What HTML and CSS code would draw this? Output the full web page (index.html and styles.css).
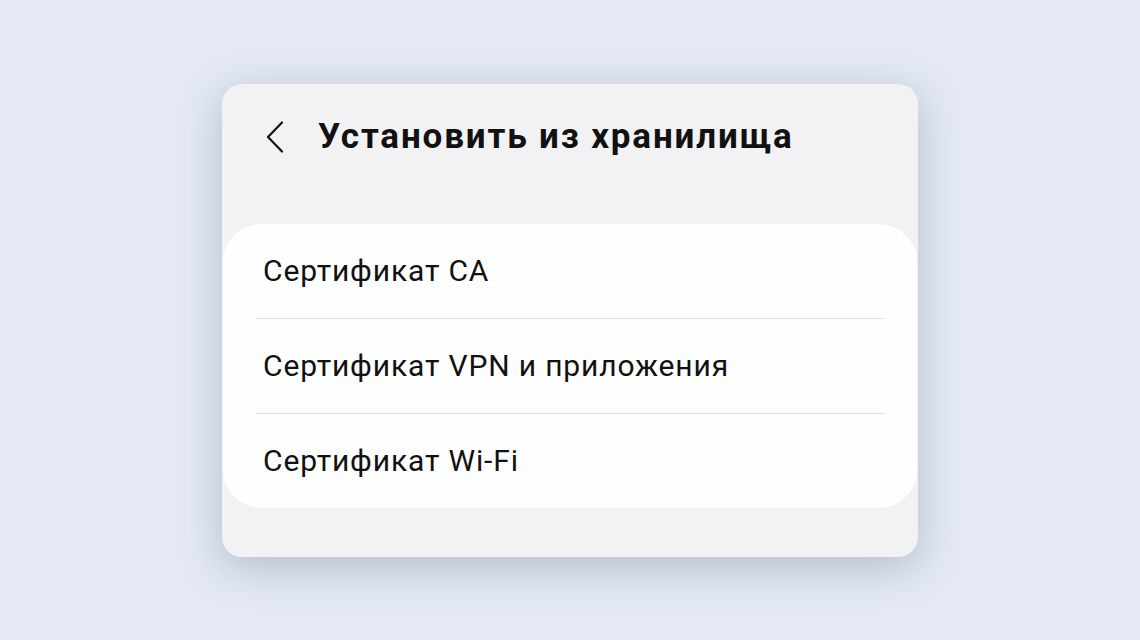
FILE: index.html
```html
<!DOCTYPE html>
<html lang="ru">
<head>
<meta charset="utf-8">
<title>Установить из хранилища</title>
<link rel="stylesheet" href="styles.css">
</head>
<body>
<div class="stage">
  <div class="card">
    <div class="header">
      <span class="back" aria-label="Назад">
        <svg width="20" height="32" viewBox="0 0 20 32"><path d="M17 1.5 L3 16 L17 30.5" fill="none" stroke="#111" stroke-width="2.2" stroke-linecap="round" stroke-linejoin="round"/></svg>
      </span>
      <h1 class="title">Установить из хранилища</h1>
    </div>
    <ul class="list">
      <li class="row">Сертификат CA</li>
      <li class="sep"></li>
      <li class="row">Сертификат VPN и приложения</li>
      <li class="sep"></li>
      <li class="row">Сертификат Wi-Fi</li>
    </ul>
  </div>
</div>
</body>
</html>
```

FILE: styles.css
```css
html, body {
  margin: 0;
  padding: 0;
}
body {
  background: #e4e9f3;
  font-family: Roboto, "Noto Sans", "Liberation Sans", sans-serif;
  color: #111;
}
.stage {
  width: 1140px;
  height: 640px;
  display: flex;
  align-items: center;
  justify-content: center;
}
.card {
  width: 696px;
  height: 473px;
  box-sizing: border-box;
  background: #f2f2f4;
  border-radius: 20px;
  box-shadow: 0 10px 40px rgba(90, 105, 135, 0.35);
  display: flex;
  flex-direction: column;
  overflow: hidden;
}
.header {
  height: 140px;
  display: flex;
  align-items: flex-start;
  padding: 36px 0 0 43px;
  box-sizing: border-box;
}
.back {
  display: flex;
  width: 20px;
  height: 32px;
  margin-right: 33px;
  margin-top: 1px;
}
.title {
  margin: 0;
  font-size: 35px;
  font-weight: 700;
  line-height: 34px;
  letter-spacing: 1.85px;
}
.list {
  list-style: none;
  margin: 0 1px;
  padding: 0;
  background: #fefefe;
  border-radius: 38px;
  height: 284px;
  display: flex;
  flex-direction: column;
}
.row {
  height: 94px;
  display: flex;
  align-items: center;
  padding-left: 40px;
  font-size: 30px;
  font-weight: 400;
  letter-spacing: 0.85px;
  color: #111;
}
.sep {
  height: 1px;
  background: #e2e2e4;
  margin: 0 32px 0 33px;
}
```
